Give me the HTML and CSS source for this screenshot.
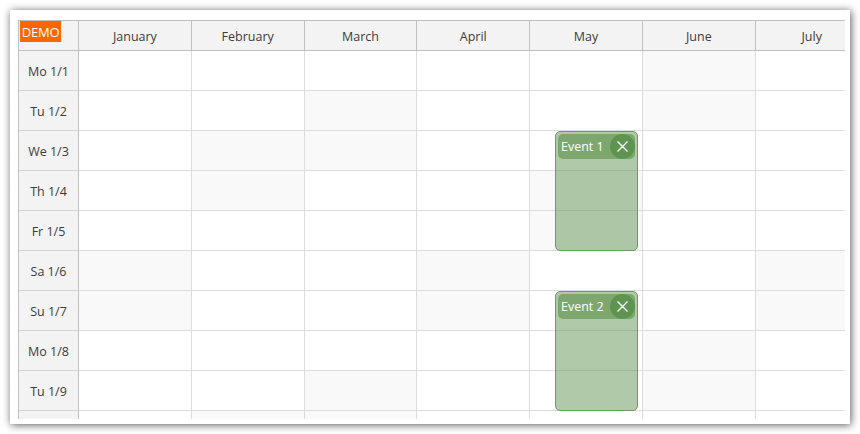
FILE: index.html
```html
<!DOCTYPE html>
<html lang="en">

<head>
    <meta charset="UTF-8">
    <title>Scheduler</title>
    <link rel="stylesheet" href="styles.css">
</head>

<body>
    <div class="card">
        <div class="scheduler">
            <div class="grid">
                <!-- Header -->
                <div class="head corner"></div>
                <div class="head">January</div>
                <div class="head">February</div>
                <div class="head">March</div>
                <div class="head">April</div>
                <div class="head">May</div>
                <div class="head">June</div>
                <div class="head">July</div>

                <div class="day">Mo 1/1</div>
                <div class="cell"></div><div class="cell"></div><div class="cell"></div><div class="cell"></div><div class="cell"></div><div class="cell off"></div><div class="cell"></div>

                <div class="day">Tu 1/2</div>
                <div class="cell"></div><div class="cell"></div><div class="cell off"></div><div class="cell"></div><div class="cell"></div><div class="cell off"></div><div class="cell"></div>

                <div class="day">We 1/3</div>
                <div class="cell"></div><div class="cell off"></div><div class="cell off"></div><div class="cell"></div><div class="cell"></div><div class="cell"></div><div class="cell"></div>

                <div class="day">Th 1/4</div>
                <div class="cell"></div><div class="cell off"></div><div class="cell"></div><div class="cell"></div><div class="cell off"></div><div class="cell"></div><div class="cell"></div>

                <div class="day">Fr 1/5</div>
                <div class="cell"></div><div class="cell"></div><div class="cell"></div><div class="cell"></div><div class="cell off"></div><div class="cell"></div><div class="cell"></div>

                <div class="day">Sa 1/6</div>
                <div class="cell off"></div><div class="cell"></div><div class="cell"></div><div class="cell off"></div><div class="cell"></div><div class="cell"></div><div class="cell off"></div>

                <div class="day">Su 1/7</div>
                <div class="cell off"></div><div class="cell"></div><div class="cell"></div><div class="cell off"></div><div class="cell"></div><div class="cell"></div><div class="cell off"></div>

                <div class="day">Mo 1/8</div>
                <div class="cell"></div><div class="cell"></div><div class="cell"></div><div class="cell"></div><div class="cell"></div><div class="cell off"></div><div class="cell"></div>

                <div class="day">Tu 1/9</div>
                <div class="cell"></div><div class="cell"></div><div class="cell off"></div><div class="cell"></div><div class="cell"></div><div class="cell off"></div><div class="cell"></div>

                <!-- Last row is cut off by the panel, its label is out of view -->
                <div class="day"></div>
                <div class="cell"></div><div class="cell off"></div><div class="cell off"></div><div class="cell"></div><div class="cell"></div><div class="cell"></div><div class="cell"></div>
            </div>

            <div class="demo">DEMO</div>

            <!-- Events -->
            <div class="event event-one">
                <div class="event-bar">
                    <span class="event-name">Event 1</span>
                    <span class="event-close">
                        <svg width="11" height="11" viewBox="0 0 11 11"><path d="M0.5 0.5 L10.5 10.5 M10.5 0.5 L0.5 10.5"/></svg>
                    </span>
                </div>
            </div>
            <div class="event event-two">
                <div class="event-bar">
                    <span class="event-name">Event 2</span>
                    <span class="event-close">
                        <svg width="11" height="11" viewBox="0 0 11 11"><path d="M0.5 0.5 L10.5 10.5 M10.5 0.5 L0.5 10.5"/></svg>
                    </span>
                </div>
            </div>
        </div>
    </div>
</body>

</html>
```

FILE: styles.css
```css
* {
    margin: 0;
    padding: 0;
    box-sizing: border-box;
}

body {
    width: 860px;
    height: 434px;
    padding: 10px;
    overflow: hidden;
    background: #fff;
    font-family: "Open Sans", "Noto Sans", sans-serif;
    font-size: 12.5px;
    color: #3c3c3c;
}

/* White panel with the screenshot shadow */
.card {
    width: 840px;
    height: 414px;
    padding: 10px 5px 5px 8px;
    background: #fff;
    box-shadow: 1px 1px 8px rgba(0, 0, 0, 0.65);
}

.scheduler {
    position: relative;
    width: 827px;
    height: 399px;
    overflow: hidden;
    border-top: 1px solid #c0c0c0;
    border-left: 1px solid #c0c0c0;
}

.grid {
    display: grid;
    grid-template-columns: 60px repeat(7, 112.8px);
    grid-template-rows: 30px repeat(10, 40px);
    width: 850px;
}

.head,
.day {
    display: flex;
    align-items: center;
    justify-content: center;
    padding-top: 2px;
    background: #f3f3f3;
    border-right: 1px solid #c0c0c0;
}

.head {
    border-bottom: 1px solid #c0c0c0;
}

.day {
    border-bottom: 1px solid #d4d4d4;
}

.cell {
    border-right: 1px solid #ddd;
    border-bottom: 1px solid #ddd;
}

.off {
    background: #f9f9f9;
}

/* Demo badge */
.demo {
    position: absolute;
    top: 0;
    left: 1px;
    width: 41px;
    height: 21px;
    background: #ff6600;
    color: #fff;
    font-size: 13px;
    letter-spacing: -0.2px;
    line-height: 22px;
    text-align: center;
}

/* Events */
.event {
    position: absolute;
    left: 536px;
    width: 83px;
    height: 120px;
    padding: 2px;
    background: rgba(88, 140, 70, 0.47);
    border: 1px solid #6c9a62;
    border-radius: 5px;
}

.event-one {
    top: 110px;
}

.event-two {
    top: 270px;
}

.event-bar {
    display: flex;
    align-items: center;
    justify-content: space-between;
    width: 77px;
    height: 25px;
    padding-left: 3px;
    background: #7ea76f;
    border-radius: 5px;
    color: #fff;
}

.event-close {
    display: flex;
    align-items: center;
    justify-content: center;
    width: 25px;
    height: 25px;
    background: #5f9450;
    border-radius: 50%;
}

.event-close path {
    fill: none;
    stroke: #fff;
    stroke-width: 1.3;
}
```
